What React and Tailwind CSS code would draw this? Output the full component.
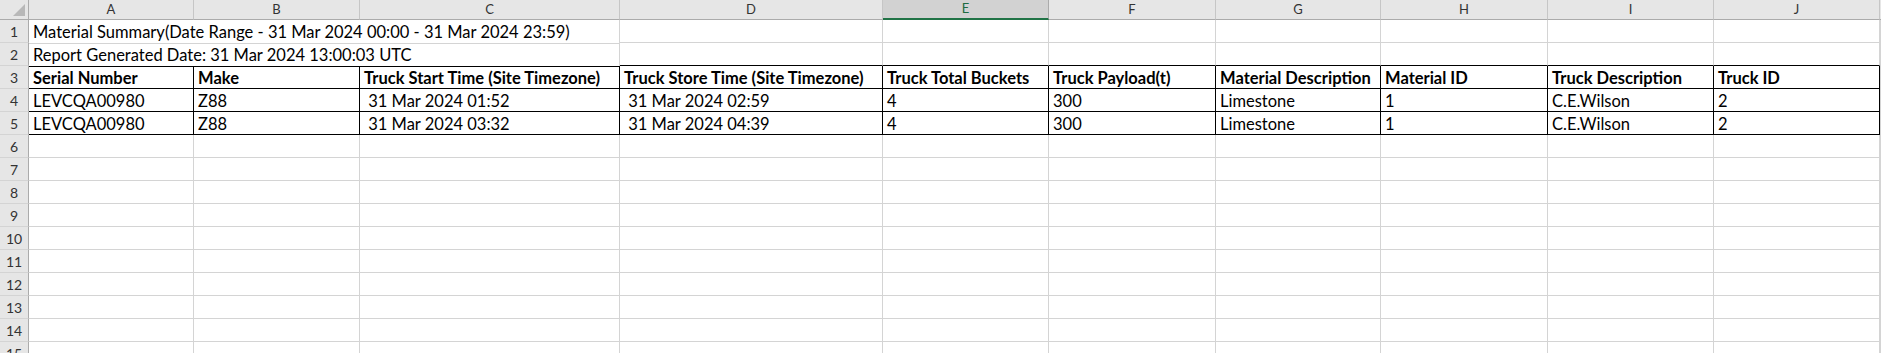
const cols = ['A', 'B', 'C', 'D', 'E', 'F', 'G', 'H', 'I', 'J']

const headers = [
  'Serial Number',
  'Make',
  'Truck Start Time (Site Timezone)',
  'Truck Store Time (Site Timezone)',
  'Truck Total Buckets',
  'Truck Payload(t)',
  'Material Description',
  'Material ID',
  'Truck Description',
  'Truck ID',
]

const rows = [
  ['LEVCQA00980', 'Z88', '\u00a031 Mar 2024 01:52', '\u00a031 Mar 2024 02:59', '4', '300', 'Limestone', '1', 'C.E.Wilson', '2'],
  ['LEVCQA00980', 'Z88', '\u00a031 Mar 2024 03:32', '\u00a031 Mar 2024 04:39', '4', '300', 'Limestone', '1', 'C.E.Wilson', '2'],
]

function RowNum({ n }) {
  return (
    <div className="flex items-center justify-center border-r border-b border-r-[#ababab] border-b-[#d4d4d4] bg-[#e6e6e6] pt-[1px] text-[14px] text-[#333]">
      {n}
    </div>
  )
}

function Cell({ children, black, bold, blackBottom }) {
  const border = black
    ? 'border-r-black border-b-black'
    : blackBottom
      ? 'border-r-[#d4d4d4] border-b-black'
      : 'border-r-[#d4d4d4] border-b-[#d4d4d4]'
  return (
    <div
      className={`overflow-visible whitespace-nowrap border-r border-b ${border} pl-[4px] pt-[1px] text-[16.5px] leading-[22px] text-black ${bold ? 'font-bold' : ''}`}
    >
      {children}
    </div>
  )
}

function Edge() {
  return <div className="bg-[#d4d4d4]" />
}

export default function App() {
  return (
    <div className="h-[353px] w-[1881px] overflow-hidden bg-white font-['Lato',sans-serif]">
      <div className="grid grid-cols-[29px_165px_166px_260px_263px_166px_167px_165px_167px_166px_166px_1px] grid-rows-[20px_repeat(15,23px)]">
        {/* corner */}
        <div className="relative border-r border-b border-[#ababab] bg-[#e6e6e6]">
          <svg className="absolute right-[3px] bottom-[3px]" width="12" height="12" viewBox="0 0 12 12">
            <polygon points="12,0 12,12 0,12" fill="#b8b8b8" />
          </svg>
        </div>
        {cols.map((c) =>
          c === 'E' ? (
            <div
              key={c}
              className="flex items-center justify-center border-r border-b-2 border-r-[#ababab] border-b-[#217346] bg-[#d2d2d2] text-[13px] text-[#1e6b41]"
            >
              {c}
            </div>
          ) : (
            <div
              key={c}
              className="flex items-center justify-center border-r border-b border-r-[#c6c6c6] border-b-[#ababab] bg-[#e6e6e6] text-[13px] text-[#333]"
            >
              {c}
            </div>
          )
        )}
        <div className="bg-[#e6e6e6] border-b border-[#ababab]" />

        {/* row 1 */}
        <RowNum n={1} />
        <div className="col-span-3 grid">
          <Cell>Material Summary(Date Range - 31 Mar 2024 00:00 - 31 Mar 2024 23:59)</Cell>
        </div>
        {cols.slice(3).map((c) => (
          <Cell key={c} />
        ))}
        <Edge />

        {/* row 2 */}
        <RowNum n={2} />
        <div className="col-span-3 grid">
          <Cell blackBottom>Report Generated Date: 31 Mar 2024 13:00:03 UTC</Cell>
        </div>
        {cols.slice(3).map((c) => (
          <Cell key={c} blackBottom />
        ))}
        <Edge />

        {/* row 3 headers */}
        <RowNum n={3} />
        {headers.map((h) => (
          <Cell key={h} black bold>
            {h}
          </Cell>
        ))}
        <Edge />

        {rows.map((r, i) => (
          <div key={i} className="contents">
            <RowNum n={4 + i} />
            {r.map((v, j) => (
              <Cell key={j} black>
                {v}
              </Cell>
            ))}
            <Edge />
          </div>
        ))}

        {Array.from({ length: 10 }, (_, i) => (
          <div key={i} className="contents">
            <RowNum n={6 + i} />
            {cols.map((c) => (
              <Cell key={c} />
            ))}
            <Edge />
          </div>
        ))}
      </div>
    </div>
  )
}
